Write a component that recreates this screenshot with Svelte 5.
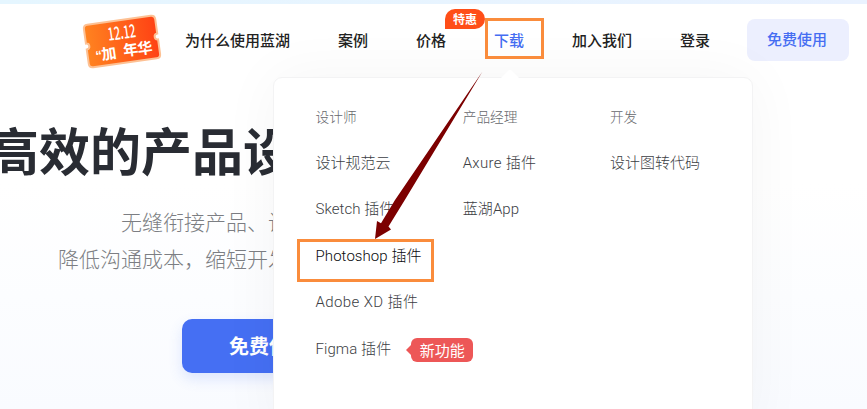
<script>
  const links = ['为什么使用蓝湖', '案例', '价格', '下载', '加入我们', '登录'];
  const columns = [
    {
      title: '设计师',
      items: [
        { name: '设计规范云' },
        { name: 'Sketch 插件', tracking: 0.05 },
        { name: 'Photoshop 插件', tracking: 0.08, hot: true },
        { name: 'Adobe XD 插件', tracking: 0.4 },
        { name: 'Figma 插件', tracking: 0.08, fresh: true }
      ]
    },
    { title: '产品经理', items: [{ name: 'Axure 插件', tracking: 0.3 }, { name: '蓝湖App', tracking: 0.1 }] },
    { title: '开发', items: [{ name: '设计图转代码' }] }
  ];
</script>

<div class="page">
  <div class="strip"></div>
  <header>
    <svg class="ticket" width="82" height="58" viewBox="0 0 82 58">
      <defs>
        <linearGradient id="fire"><stop offset="0" stop-color="#ff8320" /><stop offset="1" stop-color="#ff4214" /></linearGradient>
      </defs>
      <g transform="translate(41 29.500) rotate(-8)">
        <path d="M-32-21.500H32Q36-21.500 36-17.500V-3Q33-3 33 0T36 3V17.500Q36 21.500 32 21.500H-32Q-36 21.500-36 17.500V3Q-33 3-33 0T-36-3V-17.500Q-36-21.500-32-21.500Z" fill="url(#fire)" stroke="#fdc194" stroke-width="2" />
        <text x="-13" y="-2.500" class="date" textLength="28" lengthAdjust="spacingAndGlyphs">12.12</text>
        <text x="-28" y="15" class="quote">“</text>
        <text x="-22" y="15.500" class="fair">加</text>
        <text x="0" y="15" class="fair">年华</text>
      </g>
    </svg>
    <nav>
      {#each links as link}
        <a class:active={link === '下载'} href="#top">{link}{#if link === '价格'}<span class="deal">特惠</span>{/if}</a>
      {/each}
    </nav>
    <button class="trial">免费使用</button>
  </header>

  <main>
    <h1>高效的产品设计</h1>
    <p class="first">无缝衔接产品、设计</p>
    <p class="second">降低沟通成本，缩短开发</p>
    <button class="start">免费使用</button>
  </main>

  <section class="menu">
    <svg class="tip" width="20" height="10" viewBox="0 0 20 10"><path d="M0 10L8.500 1.500Q10 0 11.500 1.500L20 10Z" fill="#fff" /></svg>
    {#each columns as column}
      <div class="column">
        <h2>{column.title}</h2>
        {#each column.items as item}
          <div class="item" class:hot={item.hot}>
            <span style:letter-spacing="{item.tracking ?? 0}px">{item.name}</span>
            {#if item.fresh}<b class="fresh">新功能</b>{/if}
          </div>
        {/each}
      </div>
    {/each}
  </section>

  <div class="box box-nav"></div>
  <div class="box box-item"></div>
  <svg class="arrow" width="112" height="172" viewBox="0 0 112 172">
    <path d="M111.500 1.500L24 130L10 153.300L6 151L4 169L20 159.500L17.500 156.500L33.800 130Z" fill="#7c0000" />
  </svg>
</div>

<style>
  .page {
    position: relative;
    width: 867px;
    height: 409px;
    overflow: hidden;
    background: linear-gradient(#fff 45%, #f9fbff);
    font-family: "Liberation Sans", "Noto Sans CJK SC", sans-serif;
    color: #222;
  }
  .strip { height: 4px; background: linear-gradient(90deg, #e5f6ff, #eaf2ff); }
  header { display: flex; align-items: flex-start; height: 73px; padding-left: 81px; }
  .ticket { display: block; margin-top: 8px; }
  .date { font: 500 18px "Noto Sans CJK SC", sans-serif; fill: #fff; }
  .fair { font: 700 15px "Noto Sans CJK SC", sans-serif; letter-spacing: -.8px; fill: #fff; }
  .quote { font: 700 13px "Liberation Sans", sans-serif; fill: #fff; }
  nav { display: flex; gap: 48px; margin-left: 22px; padding-top: 24px; }
  nav a { position: relative; font: 500 15px/24px "Noto Sans CJK SC", sans-serif; color: #222; text-decoration: none; white-space: nowrap; }
  nav a.active { color: #456df2; }
  .deal { position: absolute; left: 29px; top: -19px; width: 40px; height: 20px; border-radius: 10px 10px 10px 0; background: #ff4e18; color: #fff; font: 700 12px/19px "Noto Sans CJK SC", sans-serif; text-align: center; }
  button { padding: 0; border: 0; font-family: "Noto Sans CJK SC", sans-serif; }
  .trial { width: 102px; height: 42px; margin: 15px 0 0 37px; padding: 0 2px 2px 0; border-radius: 8px; background: #eceffe; color: #456df2; font-size: 15px; font-weight: 500; line-height: 40px; }
  main { white-space: nowrap; }
  h1 { margin: 34px 0 0 -12px; font: 700 51px/76px "Noto Sans CJK SC", sans-serif; color: #292c33; }
  p { margin: 0; font: 300 21px/37px "Noto Sans CJK SC", sans-serif; color: #7c7e83; }
  .first { padding: 16px 0 0 121px; }
  .second { padding-left: 58px; }
  .start { display: block; width: 174px; height: 54px; margin: 42px 0 0 182px; border-radius: 10px; background: #456ff3; box-shadow: 0 6px 14px rgba(69, 111, 243, .16); color: #fff; font-size: 20px; font-weight: 700; line-height: 52px; }
  .menu { position: absolute; left: 273px; top: 77px; display: flex; box-sizing: border-box; width: 480px; height: 360px; padding: 24.500px 0 0 41.500px; border: 1px solid #f3f3f4; border-radius: 9px; background: #fff; box-shadow: 0 0 60px rgba(0, 0, 0, .045); }
  .tip { position: absolute; left: 226px; top: -9px; }
  .column { flex: none; width: 147.200px; }
  .column:last-child { width: 130px; }
  h2 { margin: 0 0 11px; font: 300 13.700px/26px "Noto Sans CJK SC", sans-serif; color: #66676c; }
  .item { display: flex; align-items: center; height: 46.500px; font: 300 15px/24px Roboto, "Noto Sans CJK SC", sans-serif; color: #3c3e44; white-space: nowrap; }
  .hot { color: #08090c; }
  .fresh { position: relative; flex: none; width: 62px; height: 24px; margin: 2px 0 0 20px; border-radius: 6px; background: #ed5757; color: #fff; font: 400 15px/24px "Noto Sans CJK SC", sans-serif; text-align: center; }
  .fresh::before { content: ""; position: absolute; left: -5px; top: 6px; border: 6px solid transparent; border-left: 0; border-right-color: #ed5757; }
  .box { position: absolute; box-sizing: border-box; border: 3px solid #fa8c3c; }
  .box-nav { left: 485px; top: 18px; width: 59px; height: 41px; }
  .box-item { left: 297px; top: 239px; width: 137px; height: 43px; }
  .arrow { position: absolute; left: 371px; top: 70px; }
</style>
